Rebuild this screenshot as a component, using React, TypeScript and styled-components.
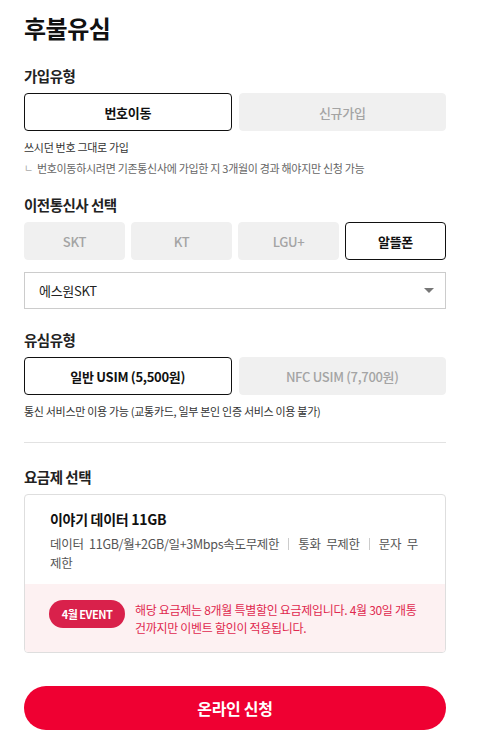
import { useState } from "react";
import styled, { createGlobalStyle } from "styled-components";

const GlobalStyle = createGlobalStyle`
  body {
    margin: 0;
    background: #fff;
    font-family: "Noto Sans CJK KR", "Noto Sans", sans-serif;
    color: #111;
  }
  * { box-sizing: border-box; }
`;

const Container = styled.div`
  width: 422px;
  margin-left: 24px;
  padding-top: 11px;
  padding-bottom: 12px;
`;

const Title = styled.h1`
  margin: 0;
  font-size: 24px;
  font-weight: 700;
  line-height: 34px;
  letter-spacing: -0.5px;
`;

const Section = styled.section<{ $top: number }>`
  margin-top: ${(p) => p.$top}px;
`;

const Label = styled.h2`
  margin: 0 0 6px;
  font-size: 14.5px;
  font-weight: 700;
  line-height: 22px;
  color: #222;
  letter-spacing: -0.5px;
`;

const Row = styled.div<{ $cols: number; $gap: number }>`
  display: grid;
  grid-template-columns: repeat(${(p) => p.$cols}, 1fr);
  gap: ${(p) => p.$gap}px;
`;

const Option = styled.button<{ $active: boolean }>`
  height: 38px;
  border-radius: 4px;
  border: 1px solid ${(p) => (p.$active ? "#111" : "#f0f0f0")};
  background: ${(p) => (p.$active ? "#fff" : "#f0f0f0")};
  color: ${(p) => (p.$active ? "#111" : "#a4a4a4")};
  font-family: inherit;
  font-size: 13px;
  font-weight: ${(p) => (p.$active ? 700 : 500)};
  letter-spacing: -0.3px;
  cursor: pointer;
  padding: 0;
`;

const Hint = styled.p`
  margin: 8px 0 0;
  font-size: 11px;
  line-height: 17px;
  color: #333;
  letter-spacing: -0.3px;
`;

const SubHint = styled.p`
  margin: 4px 0 0;
  display: flex;
  gap: 4px;
  font-size: 11px;
  line-height: 16px;
  color: #666;
  letter-spacing: -0.3px;
  span {
    color: #aaa;
    font-size: 10px;
  }
`;

const SelectBox = styled.div`
  margin-top: 12px;
  height: 37px;
  border: 1px solid #ccc;
  display: flex;
  align-items: center;
  justify-content: space-between;
  padding: 0 11px 0 14px;
  font-size: 13px;
  color: #222;
  letter-spacing: -0.3px;
`;

const Caret = styled.span`
  width: 0;
  height: 0;
  border-left: 5px solid transparent;
  border-right: 5px solid transparent;
  border-top: 5px solid #777;
`;

const Divider = styled.hr`
  margin: 22px 0 0;
  border: 0;
  border-top: 1px solid #e2e2e2;
`;

const PlanCard = styled.div`
  border: 1px solid #dedede;
  border-radius: 4px;
  overflow: hidden;
`;

const PlanBody = styled.div`
  padding: 13px 25px 12px;
`;

const PlanName = styled.div`
  font-size: 14px;
  font-weight: 700;
  line-height: 22px;
  color: #111;
  letter-spacing: -0.3px;
`;

const PlanDesc = styled.div`
  margin-top: 4px;
  font-size: 12.5px;
  line-height: 19px;
  color: #555;
  word-spacing: 3px;
  word-break: break-all;
  letter-spacing: -0.3px;
`;

const Sep = styled.i`
  display: inline-block;
  width: 1px;
  height: 12px;
  margin: 0 9px;
  background: #ccc;
  vertical-align: -1px;
`;

const EventArea = styled.div`
  background: #fdf1f2;
  display: flex;
  align-items: flex-start;
  gap: 10px;
  padding: 16px 24px 15px;
`;

const Badge = styled.span`
  flex-shrink: 0;
  width: 76px;
  height: 28px;
  border-radius: 14px;
  background: #d9214b;
  color: #fff;
  font-size: 11px;
  font-weight: 700;
  display: flex;
  align-items: center;
  justify-content: center;
  letter-spacing: -0.5px;
`;

const EventText = styled.p`
  margin: 1px 0 0;
  font-size: 12px;
  line-height: 18px;
  color: #e0294f;
  letter-spacing: -0.3px;
`;

const Submit = styled.button`
  margin-top: 33px;
  width: 100%;
  height: 44px;
  border: 0;
  border-radius: 22px;
  background: #ef0032;
  color: #fff;
  font-family: inherit;
  font-size: 16px;
  font-weight: 700;
  letter-spacing: -0.3px;
  cursor: pointer;
`;

const carriers = ["SKT", "KT", "LGU+", "알뜰폰"];
const usims = ["일반 USIM (5,500원)", "NFC USIM (7,700원)"];
const planItems = ["데이터 11GB/월+2GB/일+3Mbps속도무제한", "통화 무제한", "문자 무제한"];

function App() {
  const [joinType, setJoinType] = useState("번호이동");
  const [carrier, setCarrier] = useState("알뜰폰");
  const [usim, setUsim] = useState(usims[0]);

  return (
    <>
      <GlobalStyle />
      <Container>
        <Title>후불유심</Title>

        <Section $top={20}>
          <Label>가입유형</Label>
          <Row $cols={2} $gap={7}>
            {["번호이동", "신규가입"].map((t) => (
              <Option key={t} $active={joinType === t} onClick={() => setJoinType(t)}>
                {t}
              </Option>
            ))}
          </Row>
          <Hint>쓰시던 번호 그대로 가입</Hint>
          <SubHint>
            <span>ㄴ</span>번호이동하시려면 기존통신사에 가입한 지 3개월이 경과 해야지만 신청 가능
          </SubHint>
        </Section>

        <Section $top={18}>
          <Label>이전통신사 선택</Label>
          <Row $cols={4} $gap={6}>
            {carriers.map((c) => (
              <Option key={c} $active={carrier === c} onClick={() => setCarrier(c)}>
                {c}
              </Option>
            ))}
          </Row>
          <SelectBox>
            에스원SKT
            <Caret />
          </SelectBox>
        </Section>

        <Section $top={20}>
          <Label>유심유형</Label>
          <Row $cols={2} $gap={7}>
            {usims.map((u) => (
              <Option key={u} $active={usim === u} onClick={() => setUsim(u)}>
                {u}
              </Option>
            ))}
          </Row>
          <Hint>통신 서비스만 이용 가능 (교통카드, 일부 본인 인증 서비스 이용 불가)</Hint>
          <Divider />
        </Section>

        <Section $top={23}>
          <Label>요금제 선택</Label>
          <PlanCard>
            <PlanBody>
              <PlanName>이야기 데이터 11GB</PlanName>
              <PlanDesc>
                {planItems.map((item, i) => (
                  <span key={item}>
                    {i > 0 && <Sep />}
                    {item}
                  </span>
                ))}
              </PlanDesc>
            </PlanBody>
            <EventArea>
              <Badge>4월 EVENT</Badge>
              <EventText>
                해당 요금제는 8개월 특별할인 요금제입니다. 4월 30일 개통 건까지만 이벤트 할인이 적용됩니다.
              </EventText>
            </EventArea>
          </PlanCard>
        </Section>

        <Submit>온라인 신청</Submit>
      </Container>
    </>
  );
}

export default App;
